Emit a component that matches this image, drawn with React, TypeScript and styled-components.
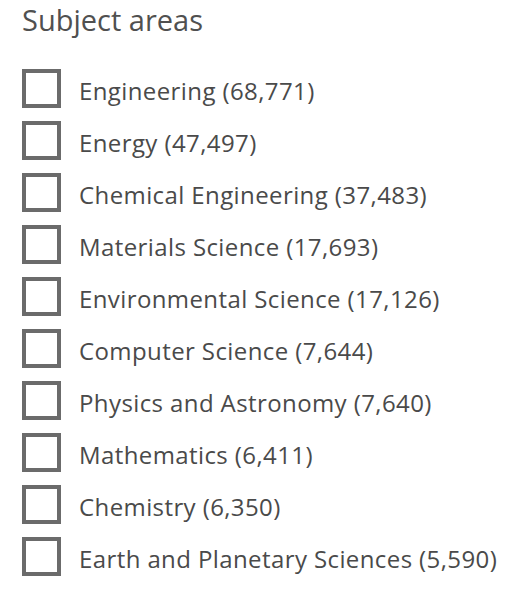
import styled, { createGlobalStyle } from "styled-components";

const GlobalStyle = createGlobalStyle`
  body {
    margin: 0;
    background: #ffffff;
    font-family: "Open Sans", "Noto Sans", sans-serif;
  }
`;

const subjects = [
  { name: "Engineering", count: "68,771" },
  { name: "Energy", count: "47,497" },
  { name: "Chemical Engineering", count: "37,483" },
  { name: "Materials Science", count: "17,693" },
  { name: "Environmental Science", count: "17,126" },
  { name: "Computer Science", count: "7,644" },
  { name: "Physics and Astronomy", count: "7,640" },
  { name: "Mathematics", count: "6,411" },
  { name: "Chemistry", count: "6,350" },
  { name: "Earth and Planetary Sciences", count: "5,590" },
];

const App = () => {
  return (
    <Panel>
      <GlobalStyle />
      <Title>Subject areas</Title>
      <List>
        {subjects.map((s) => (
          <Row key={s.name}>
            <Box />
            <Label>
              {s.name} ({s.count})
            </Label>
          </Row>
        ))}
      </List>
    </Panel>
  );
};

export default App;

const Panel = styled.div`
  padding: 0 0 0 22px;
`;

const Title = styled.h2`
  margin: 0;
  font-size: 29px;
  font-weight: 400;
  line-height: 40px;
  color: #505050;
`;

const List = styled.div`
  display: flex;
  flex-direction: column;
  gap: 13px;
  margin-top: 29px;
`;

const Row = styled.label`
  display: flex;
  align-items: center;
  gap: 18px;
  height: 39px;
`;

const Box = styled.span`
  box-sizing: border-box;
  width: 39px;
  height: 39px;
  border: 4px solid #6b6b6b;
  flex-shrink: 0;
`;

const Label = styled.span`
  padding-top: 3px;
  font-size: 24px;
  letter-spacing: 0.4px;
  color: #4a4a4a;
  white-space: nowrap;
`;
